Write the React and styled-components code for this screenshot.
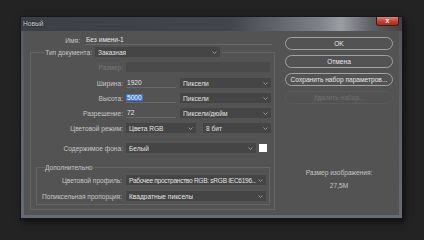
import React from "react";
import styled, { createGlobalStyle } from "styled-components";

const Global = createGlobalStyle`
  body {
    margin: 0;
    background: #232323;
    font-family: "Liberation Sans", Arial, sans-serif;
    font-size: 6.6px;
    color: #dcdcdc;
  }
`;

const Page = styled.div`
  width: 424px;
  height: 240px;
  box-sizing: border-box;
  padding: 16px 0 0 20px;
`;

const Window = styled.div`
  width: 383px;
  height: 203px;
  box-sizing: border-box;
  border: 1px solid #17181a;
  background: linear-gradient(#55585e, #666a73);
  padding: 0 3px 3px;
  display: flex;
  flex-direction: column;
  box-shadow: 2px 3px 6px rgba(0, 0, 0, 0.6);
`;

const TitleBar = styled.div`
  height: 14px;
  display: flex;
  justify-content: space-between;
  margin: 0 -3px;
  padding-left: 2px;
  background: linear-gradient(
    90deg,
    #3c3f45 0%,
    #42454b 55%,
    #7d8086 78%,
    #9a9da2 84%,
    #5c5f65 92%,
    #3f4247 100%
  );
`;

const Title = styled.span`
  line-height: 14px;
  color: #d2d5d9;
  text-shadow: 0 0 2px #000;
`;

const Close = styled.div`
  width: 23px;
  height: 9px;
  margin-right: 3px;
  box-sizing: border-box;
  border: 1px solid #4a1812;
  border-top: none;
  border-radius: 0 0 3px 3px;
  background: linear-gradient(#e28073, #c5422f 55%, #a92c1d);
  color: #fff;
  font-size: 7px;
  font-weight: bold;
  line-height: 8px;
  text-align: center;
`;

const Content = styled.div`
  flex: 1;
  display: flex;
  background: #535353;
`;

const LeftCol = styled.div`
  width: 251px;
  padding-top: 4px;
`;

const RightCol = styled.div`
  flex: 1;
  display: flex;
  flex-direction: column;
  padding: 6px 0 0 10px;
`;

const Row = styled.div`
  display: flex;
  align-items: center;
  height: 10px;
  margin-top: ${(p) => p.$top || 0}px;
`;

const Label = styled.span`
  width: ${(p) => p.$w}px;
  margin-right: ${(p) => p.$gap ?? 3}px;
  text-align: right;
  white-space: nowrap;
  color: ${(p) => (p.$off ? "#777" : "#c6c6c6")};
`;

const TextField = styled.div`
  width: ${(p) => p.$w}px;
  height: 10px;
  box-sizing: border-box;
  padding-left: ${(p) => p.$pad ?? 1}px;
  line-height: 9px;
  border-bottom: 1px solid #6a6a6a;
  color: #e4e4e4;
  white-space: nowrap;
`;

const OffField = styled.div`
  width: ${(p) => p.$w}px;
  height: 10px;
  background: #4a4a4a;
`;

const Selected = styled.span`
  background: #3b77d4;
  color: #fff;
  padding: 0 1px;
`;

const SelectBox = styled.div`
  width: ${(p) => p.$w}px;
  height: 10px;
  box-sizing: border-box;
  margin-left: ${(p) => p.$ml || 0}px;
  padding: 0 3px;
  display: flex;
  align-items: center;
  justify-content: space-between;
  gap: 2px;
  background: #454545;
  color: #e2e2e2;
  white-space: nowrap;
`;

const SelectText = styled.span`
  overflow: hidden;
  letter-spacing: ${(p) => (p.$tight ? "-0.3px" : "normal")};
`;

const Chevron = () => (
  <svg width="5" height="3" viewBox="0 0 5 3" style={{ flexShrink: 0 }}>
    <polyline points="0.5,0.5 2.5,2.5 4.5,0.5" fill="none" stroke="#a8a8a8" strokeWidth="0.8" />
  </svg>
);

const Select = ({ w, ml, tight, children }) => (
  <SelectBox $w={w} $ml={ml}>
    <SelectText $tight={tight}>{children}</SelectText>
    <Chevron />
  </SelectBox>
);

const Swatch = styled.div`
  width: 8px;
  height: 8px;
  margin-left: 3px;
  background: #fff;
`;

const Group = styled.fieldset`
  margin: ${(p) => p.$m};
  padding: 0 0 ${(p) => p.$pb}px 0;
  width: ${(p) => p.$w}px;
  box-sizing: border-box;
  min-width: 0;
  border: 1px solid #646464;
`;

const Legend = styled.legend`
  margin-left: ${(p) => p.$ml}px;
  padding: 0 2px 0 0;
  display: flex;
  align-items: center;
  height: 10px;
  color: #c6c6c6;
`;

const Button = styled.div`
  width: 108px;
  height: 13px;
  box-sizing: border-box;
  margin-bottom: 5px;
  border: 1px solid ${(p) => (p.$off ? "#5b5b5b" : "#a2a2a2")};
  border-radius: 7px;
  text-align: center;
  line-height: 11px;
  white-space: nowrap;
  color: ${(p) => (p.$off ? "#707070" : "#e6e6e6")};
`;

const SizeInfo = styled.div`
  width: 108px;
  margin-top: 57px;
  text-align: center;
  line-height: 13px;
  color: #c4c4c4;
`;

export default function App() {
  return (
    <Page>
      <Global />
      <Window>
        <TitleBar>
          <Title>Новый</Title>
          <Close>x</Close>
        </TitleBar>
        <Content>
          <LeftCol>
            <Row>
              <Label $w={56} $gap={5}>Имя:</Label>
              <TextField $w={187}>Без имени-1</TextField>
            </Row>
            <Group $m="2px 0 0 6px" $pb={4} $w={245}>
              <Legend $ml={14}>
                <Label $w={47}>Тип документа:</Label>
                <Select w={125}>Заказная</Select>
              </Legend>
              <Row $top={5}>
                <Label $w={92} $off>Размер:</Label>
                <OffField $w={144} />
              </Row>
              <Row $top={6}>
                <Label $w={92}>Ширина:</Label>
                <TextField $w={50}>1920</TextField>
                <Select w={91} ml={4}>Пиксели</Select>
              </Row>
              <Row $top={5}>
                <Label $w={92}>Высота:</Label>
                <TextField $w={50} $pad={0}>
                  <Selected>5000</Selected>
                </TextField>
                <Select w={91} ml={4}>Пиксели</Select>
              </Row>
              <Row $top={5}>
                <Label $w={92}>Разрешение:</Label>
                <TextField $w={50}>72</TextField>
                <Select w={91} ml={4}>Пиксели/дюйм</Select>
              </Row>
              <Row $top={5}>
                <Label $w={92}>Цветовой режим:</Label>
                <Select w={70}>Цвета RGB</Select>
                <Select w={68} ml={7}>8 бит</Select>
              </Row>
              <Row $top={10}>
                <Label $w={92}>Содержимое фона:</Label>
                <Select w={130}>Белый</Select>
                <Swatch />
              </Row>
              <Group $m="9px 0 0 5px" $pb={3} $w={234}>
                <Legend $ml={8}>Дополнительно</Legend>
                <Row $top={3}>
                  <Label $w={85} $gap={4}>Цветовой профиль:</Label>
                  <Select w={140} tight>Рабочее пространство RGB: sRGB IEC6196...</Select>
                </Row>
                <Row $top={6}>
                  <Label $w={85} $gap={4}>Попиксельная пропорция:</Label>
                  <Select w={140}>Квадратные пикселы</Select>
                </Row>
              </Group>
            </Group>
          </LeftCol>
          <RightCol>
            <Button>OK</Button>
            <Button>Отмена</Button>
            <Button>Сохранить набор параметров...</Button>
            <Button $off>Удалить набор...</Button>
            <SizeInfo>
              Размер изображения:
              <br />
              27,5M
            </SizeInfo>
          </RightCol>
        </Content>
      </Window>
    </Page>
  );
}
